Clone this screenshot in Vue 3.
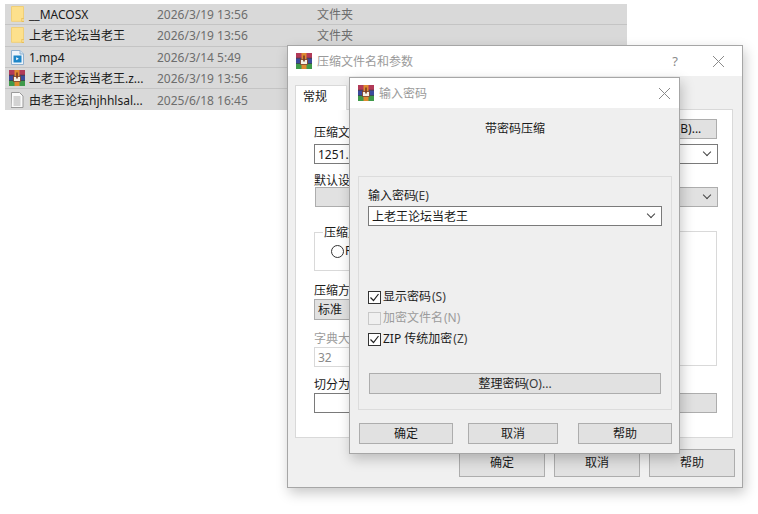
<script setup>
const files = [
  { name: '__MACOSX', date: '2026/3/19 13:56', type: '文件夹', icon: 'folder' },
  { name: '上老王论坛当老王', date: '2026/3/19 13:56', type: '文件夹', icon: 'folder' },
  { name: '1.mp4', date: '2026/3/14 5:49', type: '', icon: 'video' },
  { name: '上老王论坛当老王.z...', date: '2026/3/19 13:56', type: '', icon: 'rar' },
  { name: '由老王论坛hjhhlsal...', date: '2025/6/18 16:45', type: '', icon: 'doc' }
]
</script>

<template>
  <div class="desktop">
    <svg class="defs" width="0" height="0" aria-hidden="true">
      <symbol id="rar" viewBox="0 0 16 16">
        <rect x="0" y="0" width="16" height="5.2" fill="#b23a58" />
        <rect x="0" y="5.2" width="16" height="5.2" fill="#3c4a9c" />
        <rect x="0" y="10.4" width="16" height="5.6" fill="#3f9a4a" />
        <rect x="0" y="4.8" width="16" height="0.8" fill="#3a2a3a" />
        <rect x="0" y="10.2" width="16" height="0.8" fill="#2a3a4a" />
        <rect x="5.5" y="0" width="5" height="16" fill="#e08a30" />
        <rect x="4.5" y="6.5" width="7" height="5" fill="#f6f2e6" stroke="#7a3b20" stroke-width="0.8" />
        <rect x="7.2" y="2.5" width="1.6" height="6" fill="#7a3b20" />
      </symbol>
    </svg>

    <div class="list">
      <div v-for="f in files" :key="f.date + f.name" class="row">
        <span class="ic" :class="'ic-' + f.icon">
          <svg v-if="f.icon === 'folder'" width="14" height="16" viewBox="0 0 14 16">
            <path d="M0.5 0.5h12v14.8h-12z" fill="#fde08c" stroke="#f0cf78" />
            <path d="M10.6 12h2.4v3.6h-2.4z" fill="#e3b23c" />
            <path d="M11.4 12.6h1.2v2.4h-1.2z" fill="#fff2c4" />
          </svg>
          <svg v-else-if="f.icon === 'video'" width="14" height="16" viewBox="0 0 14 16">
            <path d="M0.5 1.5h8.5l3.5 3.5v10.5h-12z" fill="#eef4fa" stroke="#8fb0cf" />
            <path d="M9 1.5v3.5h3.5" fill="#cfe3f2" stroke="#8fb0cf" />
            <rect x="2.5" y="6.5" width="8" height="7" fill="#1d86c8" />
            <path d="M5.2 8.2l2.6 1.5-2.6 1.6z" fill="#fff" />
          </svg>
          <svg v-else-if="f.icon === 'rar'" width="16" height="16"><use href="#rar" /></svg>
          <svg v-else width="14" height="16" viewBox="0 0 14 16">
            <path d="M0.5 0.5h8l3.5 3.5v11.5h-12z" fill="#fafafa" stroke="#9a9a9a" />
            <path d="M2.5 5h7M2.5 7h7M2.5 9h7M2.5 11h7M2.5 13h7" stroke="#ababab" />
          </svg>
        </span>
        <span class="name">{{ f.name }}</span>
        <span class="date">{{ f.date }}</span>
        <span class="type">{{ f.type }}</span>
      </div>
    </div>

    <section class="win back">
      <header class="title">
        <svg width="16" height="16"><use href="#rar" /></svg>
        <span class="title-text">压缩文件名和参数</span>
        <span class="help">?</span>
        <svg class="close" width="13" height="13" viewBox="0 0 13 13"><path d="M1 1l11 11M12 1L1 12" stroke="#8a8a8a" fill="none" /></svg>
      </header>
      <div class="back-body">
        <div class="tabs"><span class="tab">常规</span></div>
        <div class="panel">
          <div class="top-row">
            <span class="lb">压缩文件名(A)</span>
            <button class="btn browse">浏览(B)...</button>
          </div>
          <div class="field sel name-sel">1251.zip<i class="chev"></i></div>
          <div class="lb mt-default">默认设置</div>
          <div class="field sel gray profile"><i class="chev"></i></div>
          <div class="cols">
            <div class="left">
              <div class="grp">
                <span class="grp-lb">压缩文件格式</span>
                <span class="radio-row"><i class="radio"></i>RAR</span>
              </div>
              <div class="lb method-lb">压缩方式(M)</div>
              <div class="field gray method">标准</div>
              <div class="lb dis dict-lb">字典大小</div>
              <div class="field dict">32</div>
            </div>
            <div class="options"></div>
          </div>
          <div class="lb split-lb">切分为分卷</div>
          <div class="bottom-row">
            <div class="field split"></div>
            <button class="btn set"></button>
          </div>
        </div>
        <div class="actions">
          <button class="btn act">确定</button>
          <button class="btn act">取消</button>
          <button class="btn act">帮助</button>
        </div>
      </div>
    </section>

    <section class="win front">
      <header class="title ftitle">
        <svg width="16" height="16"><use href="#rar" /></svg>
        <span class="title-text">输入密码</span>
        <svg class="close" width="13" height="13" viewBox="0 0 13 13"><path d="M1 1l11 11M12 1L1 12" stroke="#8a8a8a" fill="none" /></svg>
      </header>
      <div class="front-body">
        <div class="heading">带密码压缩</div>
        <div class="fgroup">
          <div class="lb pw-lb">输入密码<span class="k">(E)</span></div>
          <div class="field pw">上老王论坛当老王<i class="chev"></i></div>
          <label class="chk first"><i class="box on"><svg width="11" height="11" viewBox="0 0 11 11"><path d="M1.5 5.5l3 3 5-6.5" stroke="#222" stroke-width="1.2" fill="none" /></svg></i>显示密码<span class="k">(S)</span></label>
          <label class="chk dis"><i class="box off"></i>加密文件名<span class="k">(N)</span></label>
          <label class="chk"><i class="box on"><svg width="11" height="11" viewBox="0 0 11 11"><path d="M1.5 5.5l3 3 5-6.5" stroke="#222" stroke-width="1.2" fill="none" /></svg></i>ZIP 传统加密<span class="k">(Z)</span></label>
          <button class="btn manage">整理密码<span class="k">(O)...</span></button>
        </div>
        <div class="factions">
          <button class="btn fa">确定</button>
          <button class="btn fa fa-mid">取消</button>
          <button class="btn fa fa-end">帮助</button>
        </div>
      </div>
    </section>
  </div>
</template>

<style>
html, body { margin: 0; background: #fff; }
</style>

<style scoped>
.desktop {
  position: relative;
  width: 758px;
  height: 514px;
  overflow: hidden;
  background: #fff;
  font: 12px/16px "Noto Sans", "Noto Sans CJK SC", sans-serif;
  color: #1a1a1a;
}
.defs { position: absolute; }
.list {
  position: absolute;
  left: 5px;
  top: 4px;
  width: 622px;
}
.row {
  display: flex;
  align-items: center;
  height: 21.3px;
  background: #d9d9d9;
  border-bottom: 1px solid #c4c4c4;
  box-sizing: border-box;
}
.row:last-child { border-bottom: 0; }
.ic { width: 16px; height: 16px; margin-left: 6px; display: flex; }
.ic-rar { margin-left: 4px; margin-right: 2px; }
.name, .date, .type { position: relative; top: 1px; }
.name { width: 128px; margin-left: 2px; white-space: nowrap; }
.date { width: 160px; color: #6d6d6d; white-space: nowrap; }
.type { color: #6d6d6d; }

.win {
  position: absolute;
  box-sizing: border-box;
  border: 1px solid #a6a6a6;
  background: #f0f0f0;
  box-shadow: 2px 5px 12px rgba(0, 0, 0, 0.22);
  display: flex;
  flex-direction: column;
}
.back { left: 287px; top: 45px; width: 456px; height: 443px; }
.front { left: 349px; top: 77px; width: 331px; height: 377px; background: #efefef; }
.title {
  height: 30px;
  flex: none;
  background: #fff;
  display: flex;
  align-items: center;
  padding: 0 17px 0 8px;
  color: #9a9a9a;
  font-size: 12px;
}
.ftitle { padding-left: 8px; padding-right: 8px; height: 30px; }
.title-text { margin-left: 5px; flex: 1; position: relative; top: 1px; }
.help { margin-right: 34px; color: #8a8a8a; font-size: 13px; }
.close { flex: none; }

.back-body { flex: 1; padding: 9px 9px 0 7px; display: flex; flex-direction: column; }
.tabs { display: flex; height: 25px; }
.tab {
  width: 52px;
  height: 25px;
  box-sizing: border-box;
  border: 1px solid #d9d9d9;
  border-bottom: 0;
  background: #fff;
  padding: 3px 0 0 7px;
  position: relative;
  z-index: 1;
}
.panel {
  height: 329px;
  margin-top: -1px;
  box-sizing: border-box;
  border: 1px solid #d9d9d9;
  background: #fff;
  padding: 9px 14px 0 18px;
}
.top-row { display: flex; justify-content: space-between; height: 20px; align-items: flex-end; }
.btn {
  box-sizing: border-box;
  font: inherit;
  color: inherit;
  background: #e1e1e1;
  border: 1px solid #adadad;
  padding: 0;
}
.browse { width: 80px; height: 20px; margin-right: 1px; text-align: center; }
.field {
  box-sizing: border-box;
  height: 20px;
  border: 1px solid #7a7a7a;
  background: #fff;
  padding: 0 3px;
  line-height: 19px;
  position: relative;
}
.sel { margin-top: 5px; }
.gray { background: #e1e1e1; border-color: #adadad; }
.lb { line-height: 14px; position: relative; top: 1px; }
.mt-default { margin-top: 9px; }
.profile { margin-top: 0; margin-left: 1px; }
.chev {
  position: absolute;
  right: 7px;
  top: 4px;
  width: 5px;
  height: 5px;
  border-right: 1px solid #444;
  border-bottom: 1px solid #444;
  transform: rotate(45deg);
}
.cols { display: flex; justify-content: space-between; margin-top: 24px; }
.left { width: 190px; }
.grp {
  box-sizing: border-box;
  height: 39px;
  margin-top: 1px;
  border: 1px solid #d9d9d9;
  position: relative;
  padding: 10px 0 0 16px;
  display: block;
}
.grp-lb { position: absolute; left: 8px; top: -8px; background: #fff; padding: 0 1px; }
.radio-row { display: flex; align-items: center; gap: 1px; }
.radio {
  width: 13px;
  height: 13px;
  box-sizing: border-box;
  border: 1px solid #333;
  border-radius: 50%;
  display: block;
}
.method-lb { margin-top: 12px; }
.method { margin-top: 2px; height: 21px; }
.dict-lb { margin-top: 11px; }
.dis { color: #9c9c9c; }
.dict { margin-top: 2px; color: #8a8a8a; border-color: #d9d9d9; }
.options { width: 190px; height: 135px; border: 1px solid #d9d9d9; box-sizing: border-box; margin-right: 1px; }
.split-lb { margin-top: 10px; }
.bottom-row { display: flex; justify-content: space-between; margin-top: 2px; }
.split { width: 190px; }
.set { width: 190px; height: 20px; margin-right: 1px; }
.actions { display: flex; justify-content: flex-end; gap: 9px; margin-top: 11px; margin-right: -2px; }
.act { width: 86px; height: 28px; }

.front-body { flex: 1; padding: 0 7px 0 8px; display: flex; flex-direction: column; }
.heading { text-align: center; margin-top: 13px; height: 16px; }
.fgroup {
  margin-top: 39px;
  height: 234px;
  box-sizing: border-box;
  border: 1px solid #dcdcdc;
  padding: 11px 9px 0 9px;
  display: flex;
  flex-direction: column;
}
.k { color: #3a3a3a; margin-left: -1px; }
.dis .k { color: inherit; }
.pw { margin-top: 4px; }
.chk { display: flex; align-items: center; height: 14px; gap: 2px; margin-top: 7px; position: relative; top: 1px; }
.first { margin-top: 63px; }
.box {
  width: 13px;
  height: 13px;
  box-sizing: border-box;
  border: 1px solid #333;
  background: #fff;
  display: flex;
  align-items: center;
  justify-content: center;
}
.box.off { border-color: #c8c8c8; background: #f0f0f0; }
.manage { height: 21px; margin: 28px 1px 0 1px; padding-top: 1px; }
.factions { display: flex; margin-top: 13px; margin-left: 1px; }
.fa { width: 94px; height: 21px; padding-top: 1px; }
.fa-mid { width: 90px; margin-left: 15px; }
.fa-end { margin-left: 20px; }
</style>
